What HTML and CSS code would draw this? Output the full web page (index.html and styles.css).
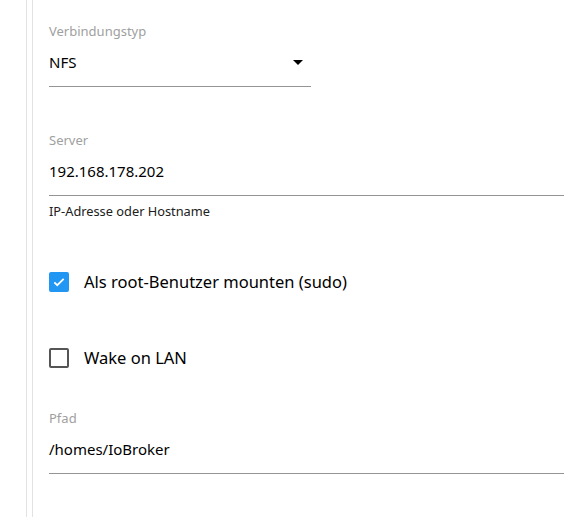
FILE: index.html
```html
<!DOCTYPE html>
<html lang="de">
<head>
    <meta charset="UTF-8">
    <title>Verbindung</title>
    <link rel="stylesheet" href="styles.css">
</head>
<body>
    <div class="rail">
        <div class="panel">
            <div class="field field--short">
                <label class="field__label">Verbindungstyp</label>
                <div class="field__input">
                    <span>NFS</span>
                    <svg class="field__arrow" width="10" height="5" viewBox="0 0 10 5"><path d="M0 0h10L5 5z"/></svg>
                </div>
            </div>

            <div class="field">
                <label class="field__label">Server</label>
                <div class="field__input">192.168.178.202</div>
                <div class="field__help">IP-Adresse oder Hostname</div>
            </div>

            <label class="check check--first">
                <span class="check__box check__box--on">
                    <svg width="14" height="14" viewBox="0 0 24 24"><path d="M4 12.5l5 5L20 6.5" fill="none" stroke="#fff" stroke-width="3"/></svg>
                </span>
                <span class="check__text">Als root-Benutzer mounten (sudo)</span>
            </label>

            <label class="check">
                <span class="check__box"></span>
                <span class="check__text">Wake on LAN</span>
            </label>

            <div class="field field--last">
                <label class="field__label">Pfad</label>
                <div class="field__input">/homes/IoBroker</div>
            </div>
        </div>
    </div>
</body>
</html>
```

FILE: styles.css
```css
body {
    margin: 0;
    background-color: #ffffff;
    font-family: "Noto Sans", "Open Sans", sans-serif;
    color: #000000;
    height: 517px;
    overflow: hidden;
}

.rail {
    margin-left: 26px;
    border-left: 1px solid #e2e2e2;
    height: 100%;
}

.panel {
    margin-left: 5px;
    border-left: 1px solid #e2e2e2;
    height: 100%;
    padding: 22px 0 0 16px;
    box-sizing: border-box;
}

.field {
    display: flex;
    flex-direction: column;
}

.field--short {
    width: 262px;
}

.field__label {
    font-size: 13px;
    color: #a0a0a0;
    line-height: 18px;
}

.field__input {
    display: flex;
    justify-content: space-between;
    align-items: center;
    font-size: 15px;
    line-height: 20px;
    padding: 12px 0 14px;
    border-bottom: 1px solid #949494;
}

.field__arrow {
    margin-right: 8px;
    fill: #000000;
}

.field + .field {
    margin-top: 44px;
}

.field__help {
    font-size: 12.8px;
    line-height: 16px;
    margin-top: 7px;
    color: #202020;
}

.check {
    display: flex;
    align-items: center;
    gap: 15px;
    font-size: 16.5px;
    line-height: 20px;
}

.check--first {
    margin-top: 53px;
}

.check + .check {
    margin-top: 56px;
}

.check__box {
    width: 16px;
    height: 16px;
    border: 2px solid #555555;
    border-radius: 2px;
    display: flex;
    align-items: center;
    justify-content: center;
}

.check__box--on {
    background-color: #2196f3;
    border-color: #2196f3;
}

.field--last {
    margin-top: 41px;
}
```
